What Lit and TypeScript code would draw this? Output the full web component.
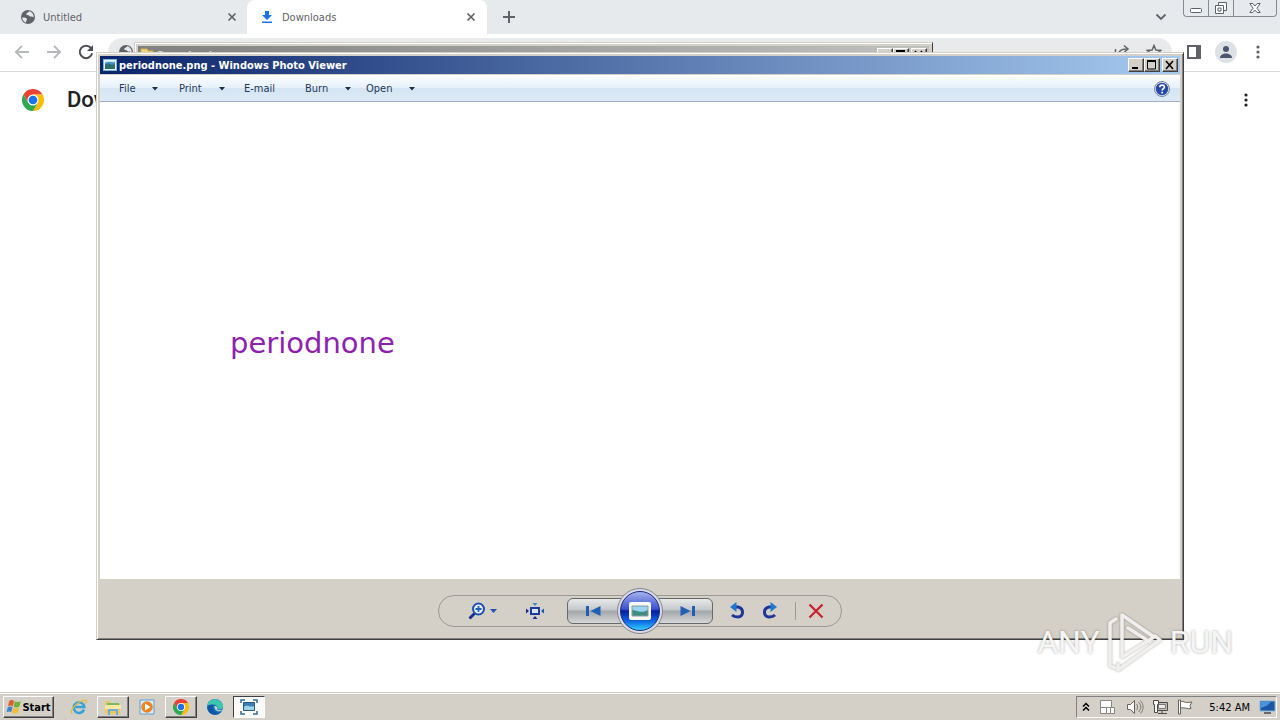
import { LitElement, html, svg, css } from "lit";
import { customElement } from "lit/decorators.js";

const globe = html`<svg width="16" height="16" viewBox="0 0 16 16" aria-hidden="true">
  <circle cx="8" cy="8" r="7" fill="#5f6368" />
  <path d="M2.200 8.600c2.300-.3 4.600.2 4.800 1.500.2 1.200-1.300 1.400-1 3.600C3.800 13 2.300 11 2.200 8.600zM9.200 2.300c-.5 1.500-3 1.300-3 2.700 0 1.300 2.300.8 3.200 2 .8 1.100 2.700.2 4.300 1.200.2-2.800-1.700-5.300-4.500-5.900z" fill="#e7eaed" />
</svg>`;

const closeX = html`<svg width="10" height="10" viewBox="0 0 10 10" aria-hidden="true">
  <path d="M1.500 1.500l7 7M8.500 1.500l-7 7" stroke="#5f6368" stroke-width="1.700" />
</svg>`;

const kebab = (color: string) => html`<svg width="16" height="16" viewBox="0 0 16 16" aria-hidden="true">
  <g fill="${color}"><circle cx="8" cy="3" r="1.600" /><circle cx="8" cy="8" r="1.600" /><circle cx="8" cy="13" r="1.600" /></g>
</svg>`;

const chromeLogo = (size: number) => html`<svg width="${size}" height="${size}" viewBox="0 0 48 48" aria-hidden="true">
  <path d="M24 12h20.800A24 24 0 0 0 3.200 12l10.400 18z" fill="#ea4335" />
  <path d="M34.400 30L24 48A24 24 0 0 0 44.800 12H24z" fill="#fbbc04" />
  <path d="M13.600 30L3.200 12A24 24 0 0 0 24 48l10.400-18z" fill="#2da94f" />
  <circle cx="24" cy="24" r="12" fill="#fff" /><circle cx="24" cy="24" r="9.500" fill="#1a73e8" />
</svg>`;

const photoGlyph = svg`
  <rect x="1.500" y="1.500" width="13" height="11" fill="#eaf6ff" stroke="#7fb4de" />
  <rect x="3" y="3" width="10" height="8" fill="#3f8fc9" />
  <path d="M3 7c3-3 6 1 10-1v5H3z" fill="#2c6f6c" /><path d="M3 5c3-2 6 0 10-1V3H3z" fill="#bfe4fa" />`;

const minGlyph = html`<svg width="12" height="10" viewBox="0 0 12 10" aria-hidden="true"><path d="M2 8h6" stroke="#000" stroke-width="2" /></svg>`;
const maxGlyph = html`<svg width="12" height="10" viewBox="0 0 12 10" aria-hidden="true"><path d="M1.500 1v8h8V1M1 1.500h9" fill="none" stroke="#000" /><path d="M1 1h9" stroke="#000" stroke-width="2" /></svg>`;
const xGlyph = html`<svg width="12" height="10" viewBox="0 0 12 10" aria-hidden="true"><path d="M2 1l7 8M9 1l-7 8" stroke="#000" stroke-width="1.600" /></svg>`;

const reset = css`
  *, *::before, *::after { box-sizing: border-box; }
  button, input { font: inherit; color: inherit; border: 0; padding: 0; margin: 0; background: none; }
  button { display: flex; align-items: center; justify-content: center; }
  svg { display: block; flex: none; }
`;

const caption = css`
  .captions { display: flex; gap: 2px; }
  .caption { width: 16px; height: 14px; background: #d4d0c8; border: 1px solid; border-color: #fff #404040 #404040 #fff; box-shadow: inset -1px -1px #808080; }
  .pair { display: flex; }
`;

@customElement("browser-window")
export class BrowserWindow extends LitElement {
  static styles = [reset, css`
    :host { display: flex; flex-direction: column; background: #fff; font-family: Roboto, sans-serif; color: #5f6368; }
    .strip { height: 34px; flex: none; background: #e7eaed; display: flex; align-items: center; }
    .tab { width: 240px; height: 34px; display: flex; align-items: center; gap: 7px; padding: 0 11px 0 12px; font: 11px "DejaVu Sans Condensed", "DejaVu Sans", sans-serif; }
    .tab.first { width: 247px; padding-left: 20px; padding-right: 10px; }
    .tab.active { background: #fff; border-radius: 8px 8px 0 0; }
    .tab button.name { flex: 1; justify-content: flex-start; }
    .plus { margin-left: 14px; width: 16px; height: 16px; }
    .spacer { flex: 1; }
    .more { margin-right: 16px; }
    .controls { align-self: flex-start; display: flex; margin-right: 3px; height: 17px; border: 1px solid #868b92; border-top: 0; border-radius: 0 0 4px 4px; }
    .controls button { width: 25px; border-right: 1px solid #868b92; }
    .controls button:last-child { width: 42px; border: 0; }
    .bar { height: 38px; flex: none; border-bottom: 1px solid #dadce0; display: flex; align-items: center; padding: 0 14px 2px; gap: 16px; }
    .address { flex: 1; height: 28px; border-radius: 14px; background: #e9eaec; display: flex; align-items: center; gap: 16px; padding: 0 10px; margin: 0 -2px; }
    .address input { flex: 1; min-width: 0; outline: 0; }
    .tools { display: flex; align-items: center; gap: 13px; }
    .avatar { width: 22px; height: 22px; border-radius: 50%; background: #dee1e6; }
    .header { display: flex; align-items: center; padding: 14px 26px 0 22px; gap: 23px; color: #202124; }
    h1 { margin: 0; font-size: 22px; font-weight: 500; line-height: 28px; }
  `];

  render() {
    return html`
      <div class="strip">
        <div class="tab first">${globe}<button class="name">Untitled</button><button aria-label="Close Untitled">${closeX}</button></div>
        <div class="tab active">
          <svg width="16" height="16" viewBox="0 0 16 16" aria-hidden="true"><path d="M6 2h4v4h3l-5 5-5-5h3zM3 12.500h10V14H3z" fill="#1a73e8" /></svg>
          <button class="name">Downloads</button><button aria-label="Close Downloads">${closeX}</button>
        </div>
        <button class="plus" aria-label="New tab"><svg width="14" height="14" viewBox="0 0 14 14"><path d="M7 1v12M1 7h12" stroke="#5f6368" stroke-width="2" /></svg></button>
        <span class="spacer"></span>
        <button class="more" aria-label="Search tabs"><svg width="12" height="8" viewBox="0 0 12 8"><path d="M1.500 1.500L6 6l4.500-4.500" fill="none" stroke="#5f6368" stroke-width="1.800" /></svg></button>
        <div class="controls">
          <button aria-label="Minimize"><svg width="12" height="16" viewBox="0 0 12 16"><rect x=".5" y="8.500" width="11" height="4" rx="1" fill="#fff" stroke="#5a626c" /></svg></button>
          <button aria-label="Restore"><svg width="14" height="16" viewBox="0 0 14 16"><g fill="#fff" stroke="#5a626c"><path d="M4.500 2.500h8v8h-8z" /><path d="M1.500 5.500h8v8h-8z" /><path d="M4 8h3v3H4z" /></g></svg></button>
          <button aria-label="Close"><svg width="12" height="16" viewBox="0 0 12 16"><path d="M.8 3.500h3L6 6l2.200-2.500h3L7.900 8.200l3.300 4.300h-3L6 10.200 3.800 12.500h-3l3.300-4.300z" fill="#fff" stroke="#5a626c" /></svg></button>
        </div>
      </div>
      <div class="bar">
        <button aria-label="Back"><svg width="16" height="16" viewBox="0 0 16 16"><path d="M15 8H2M8 1.800L1.800 8 8 14.200" fill="none" stroke="#b5b7ba" stroke-width="1.800" /></svg></button>
        <button aria-label="Forward"><svg width="16" height="16" viewBox="0 0 16 16"><path d="M1 8h13M8 1.800L14.200 8 8 14.200" fill="none" stroke="#b5b7ba" stroke-width="1.800" /></svg></button>
        <button aria-label="Reload"><svg width="16" height="16" viewBox="0 0 16 16"><path d="M13 4.200A6.200 6.200 0 1 0 14.100 9.200" fill="none" stroke="#4c5055" stroke-width="2" /><path d="M15 1v6H9z" fill="#4c5055" /></svg></button>
        <div class="address">
          ${globe}<input aria-label="Address" />
          <svg width="16" height="16" viewBox="0 0 16 16" aria-hidden="true"><path d="M1.500 5v9.500h11V11M4.500 11c0-4 3-6 8-6M10 1.500L14 5l-4 3.500" fill="none" stroke="#5f6368" stroke-width="1.500" /></svg>
          <svg width="16" height="16" viewBox="0 0 16 16" aria-hidden="true"><path d="M8 1.500l1.900 4.500 4.900.4-3.700 3.200 1.100 4.800L8 11.900l-4.200 2.500 1.100-4.800L1.200 6.400 6.100 6z" fill="none" stroke="#5f6368" stroke-width="1.500" /></svg>
        </div>
        <div class="tools">
          <button aria-label="Side panel"><svg width="16" height="16" viewBox="0 0 16 16"><path d="M1 1h14v14H1z" fill="#5f6368" /><path d="M3 3h7v10H3z" fill="#fff" /></svg></button>
          <button class="avatar" aria-label="Profile"><svg width="14" height="14" viewBox="0 0 14 14"><circle cx="7" cy="4" r="3" fill="#4a5670" /><path d="M1 13c0-6 12-6 12 0z" fill="#4a5670" /></svg></button>
          <button aria-label="Menu">${kebab("#5f6368")}</button>
        </div>
      </div>
      <div class="header">${chromeLogo(22)}<h1>Downloads</h1><span class="spacer"></span><button aria-label="More actions">${kebab("#202124")}</button></div>
    `;
  }
}

@customElement("folder-window")
export class FolderWindow extends LitElement {
  static styles = [reset, caption, css`
    :host { display: block; background: #d4d0c8; border: 1px solid; border-color: #d4d0c8 #404040 #404040 #d4d0c8; box-shadow: inset 1px 1px #fff; padding: 3px; }
    .title { height: 18px; display: flex; align-items: center; gap: 3px; padding: 0 2px; color: #d4d0c8; background: linear-gradient(90deg, #808080, #c0c0c0); font: bold 11px "DejaVu Sans Condensed", "DejaVu Sans", sans-serif; }
    .name { flex: 1; }
  `];

  render() {
    return html`<div class="title">
      <svg width="14" height="14" viewBox="0 0 14 14" aria-hidden="true"><path d="M1 1h6l1 2h5v10H1z" fill="#f3d774" stroke="#d8b14a" /></svg>
      <span class="name">Downloads</span>
      <div class="captions"><div class="pair"><button class="caption" aria-label="Minimize">${minGlyph}</button><button class="caption" aria-label="Maximize">${maxGlyph}</button></div><button class="caption" aria-label="Close">${xGlyph}</button></div>
    </div>`;
  }
}

@customElement("photo-viewer")
export class PhotoViewer extends LitElement {
  static styles = [reset, caption, css`
    :host { display: flex; flex-direction: column; background: #d4d0c8; border: 1px solid; border-color: #d4d0c8 #404040 #404040 #d4d0c8; box-shadow: inset 1px 1px #fff, inset -1px -1px #808080; padding: 3px; font: 11px "DejaVu Sans Condensed", "DejaVu Sans", sans-serif; }
    .title { height: 18px; flex: none; display: flex; align-items: center; gap: 1px; padding: 0 2px; color: #fff; font-weight: bold; background: linear-gradient(90deg, #0a246a, #a6caf0); }
    .name { flex: 1; white-space: nowrap; }
    .menu { height: 27px; flex: none; margin-top: 1px; display: grid; grid-template-columns: 60px 65px 61px 61px 1fr 16px; align-items: center; padding: 0 10px 0 19px; color: #1e395b; background: linear-gradient(#fbfdff, #e6f0fa 46%, #d6e5f3 50%, #dceaf5); border-top: 1px solid #fff; border-bottom: 1px solid #a0afc3; }
    .menu button { justify-content: flex-start; gap: 17px; }
    .photo { flex: 1; background: #fff; display: flex; align-items: center; padding: 4px 0 0 130px; font: 29px "DejaVu Sans", sans-serif; color: #8f1fae; }
    .footer { height: 57px; flex: none; display: flex; align-items: center; justify-content: center; padding-top: 6px; }
    .pill { width: 404px; height: 32px; border: 1px solid #9c9a96; border-radius: 16px; display: grid; grid-template: 30px / 64px 64px 146px 48px 18px 1fr; align-items: center; }
    .zoom { justify-self: end; gap: 4px; margin-right: 6px; }
    .nav { display: flex; align-items: center; }
    .step { flex: 1; height: 26px; border: 1px solid #66686c; background: linear-gradient(#e8e9e9, #c4c6c8 46%, #a3a6aa 50%, #d5d6d7); }
    .step.prev { border-radius: 6px 0 0 6px; margin-right: -6px; padding-right: 4px; }
    .step.next { border-radius: 0 6px 6px 0; margin-left: -6px; padding-left: 4px; }
    .show { width: 46px; height: 46px; z-index: 1; }
    .delete { border-left: 1px solid #9c9a96; height: 18px; padding-left: 12px; justify-self: start; margin-left: 16px; }
  `];

  render() {
    const arrow = html`<svg width="6" height="4" viewBox="0 0 6 4" aria-hidden="true"><path d="M0 0h6L3 3.500z" fill="#1e2f4d" /></svg>`;
    const item = (name: string, drop = true) => html`<button>${name}${drop ? arrow : ""}</button>`;
    return html`
      <div class="title">
        <svg width="16" height="14" viewBox="0 0 16 14" aria-hidden="true">${photoGlyph}</svg>
        <span class="name">periodnone.png - Windows Photo Viewer</span>
        <div class="captions"><div class="pair"><button class="caption" aria-label="Minimize">${minGlyph}</button><button class="caption" aria-label="Maximize">${maxGlyph}</button></div><button class="caption" aria-label="Close">${xGlyph}</button></div>
      </div>
      <div class="menu">
        ${item("File")}${item("Print")}${item("E-mail", false)}${item("Burn")}${item("Open")}
        <button aria-label="Help"><svg width="16" height="16" viewBox="0 0 16 16"><circle cx="8" cy="8" r="7.500" fill="#e4e9f2" stroke="#7b8499" /><circle cx="8" cy="8" r="6.200" fill="#2549a8" /><path d="M5.800 6.300c0-3 4.600-2.900 4.600-.3 0 1.700-2.200 1.700-2.200 3.400M8.200 10.800v1.600" fill="none" stroke="#fff" stroke-width="1.700" /></svg></button>
      </div>
      <div class="photo">periodnone</div>
      <div class="footer">
        <div class="pill">
          <button class="zoom" aria-label="Zoom">
            <svg width="18" height="18" viewBox="0 0 18 18"><circle cx="10.500" cy="7" r="5.500" fill="#eaf4ff" stroke="#1d4fb4" stroke-width="2" /><path d="M10.500 4v6M7.500 7h6" stroke="#1d5fc4" stroke-width="1.800" /><path d="M6.500 11.500L1.500 16.500" stroke="#15308c" stroke-width="2.800" /></svg>
            <svg width="7" height="4" viewBox="0 0 7 4"><path d="M0 0h7L3.500 4z" fill="#1d56b0" /></svg>
          </button>
          <button aria-label="Actual size"><svg width="18" height="16" viewBox="0 0 18 16"><rect x="5" y="5" width="8" height="6" fill="#d5e6f7" stroke="#1b3c9e" stroke-width="2" /><path d="M6.500 0h5L9 3z" fill="#3a87cf" /><path d="M6.500 16h5L9 13zM0 5.500v5L3 8z" fill="#16288a" /><path d="M18 5.500v5L15 8z" fill="#1d56b0" /></svg></button>
          <div class="nav">
            <button class="step prev" aria-label="Previous"><svg width="15" height="12" viewBox="0 0 15 12"><path d="M0 1h3v10H0zM14.500 1v10L4.500 6z" fill="#1f5fb5" /></svg></button>
            <button class="show" aria-label="Play slide show"><svg width="46" height="46" viewBox="0 0 46 46">
              <defs><linearGradient id="orb" x2="0" y2="1"><stop offset="0" stop-color="#a9b6ee" /><stop offset=".45" stop-color="#3a50cf" /><stop offset=".5" stop-color="#0a1ba0" /><stop offset=".75" stop-color="#0b62e0" /><stop offset="1" stop-color="#35d4ff" /></linearGradient></defs>
              <circle cx="23" cy="23" r="22.500" fill="#d9dbe2" stroke="#85878f" /><circle cx="23" cy="23" r="19.500" fill="url(#orb)" stroke="#1c2c86" />
              <rect x="12" y="14" width="22" height="18" rx="2" fill="#f6f8fa" /><rect x="15" y="18" width="16" height="10" fill="#9bd3ef" /><path d="M15 22c5 0 8 4 16 0v6H15z" fill="#3e8e7f" /><path d="M15 18h16v10H15z" fill="none" stroke="#8a98a8" />
            </svg></button>
            <button class="step next" aria-label="Next"><svg width="15" height="12" viewBox="0 0 15 12"><path d="M12 1h3v10h-3zM.5 1v10l10-5z" fill="#1f5fb5" /></svg></button>
          </div>
          <button aria-label="Rotate counterclockwise"><svg width="16" height="18" viewBox="0 0 16 18"><path d="M6 5h3c6.500 1.500 5.500 10 0 10-3 0-4.500-.5-6-2" fill="none" stroke="#1c3596" stroke-width="3" /><path d="M1 5L7.500 0v10z" fill="#1f78cf" /></svg></button>
          <button aria-label="Rotate clockwise"><svg width="16" height="18" viewBox="0 0 16 18"><path d="M10 5H7c-6.500 1.500-5.500 10 0 10 3 0 4.500-.5 6-2" fill="none" stroke="#1c3596" stroke-width="3" /><path d="M15 5L8.500 0v10z" fill="#1f78cf" /></svg></button>
          <button class="delete" aria-label="Delete"><svg width="16" height="16" viewBox="0 0 16 16"><path d="M1.500 1.500l13 13M14.500 1.500l-13 13" stroke="#c9202c" stroke-width="2.200" /></svg></button>
        </div>
      </div>
    `;
  }
}

@customElement("task-bar")
export class TaskBar extends LitElement {
  static styles = [reset, css`
    :host { display: flex; align-items: center; height: 28px; padding: 3px 3px 2px; background: #d4d0c8; border-top: 1px solid #d4d0c8; box-shadow: inset 0 1px #fff; font: 11px "DejaVu Sans Condensed", "DejaVu Sans", sans-serif; color: #000; }
    .start { height: 22px; width: 51px; font-weight: bold; }
    .start, .open { background: #d4d0c8; border: 1px solid; border-color: #fff #404040 #404040 #fff; box-shadow: inset -1px -1px #808080; }
    .apps { display: flex; gap: 2px; margin-left: 9px; flex: 1; }
    .app { width: 32px; height: 22px; }
    .current { background: #fbfaf9; border: 1px solid; border-color: #404040 #fff #fff #404040; }
    .tray { height: 22px; display: flex; align-items: center; border: 1px solid; border-color: #808080 #fff #fff #808080; padding: 0 0 0 5px; gap: 8px; }
    .time { margin: 0 1px 0 7px; }
  `];

  render() {
    return html`
      <button class="start">
        <svg width="16" height="16" viewBox="0 0 17 16" aria-hidden="true"><path d="M3.500 1.500c2-1.200 3.500-1 5 0L7.200 7.200c-1.600-1-3.200-1-5 0z" fill="#e2592c" /><path d="M9.300 2c2 1 4 1 6.500 0l-1.600 5.700c-2 1-4 1-6.100 0z" fill="#6fb33b" /><path d="M2 8.200c1.800-1 3.300-1 5 0l-1.400 5.200c-1.500-1-3-1-5 0z" fill="#3b82cf" /><path d="M7.800 8.700c2 1 4 1 6.100 0l-1.500 5.400c-2 1-4 1-6 0z" fill="#f5bd2c" /></svg>
        Start
      </button>
      <div class="apps">
        <button class="app" aria-label="Internet Explorer"><svg width="18" height="18" viewBox="0 0 18 18"><path d="M14 11.500A5.300 5.300 0 1 1 14.300 9H5" fill="none" stroke="#37a3dc" stroke-width="2.600" /><path d="M2 15.500C-1 12 10 1.500 15.500 2.200c1.500.3 1 2.500 0 3.500" fill="none" stroke="#e9b93c" stroke-width="1.300" /></svg></button>
        <button class="app open" aria-label="Windows Explorer"><svg width="18" height="18" viewBox="0 0 18 18"><path d="M1 3h5l1 2h9v11H1z" fill="#ecc95b" /><path d="M3 5h12v5H3z" fill="#75bb6c" /><path d="M1 7h16v4H1z" fill="#fbe9a0" /><path d="M4 17v-5q0-1 1-1h8q1 0 1 1v5h-2v-4H6v4z" fill="#69aede" /></svg></button>
        <button class="app" aria-label="Windows Media Player"><svg width="16" height="16" viewBox="0 0 16 16"><path d="M1 1h14v14H1z" fill="#d8ecfb" stroke="#5d9fd3" /><circle cx="8" cy="8" r="5.800" fill="#f0831e" /><path d="M6 4.500v7L11.500 8z" fill="#fff" /></svg></button>
        <button class="app open" aria-label="Google Chrome">${chromeLogo(16)}</button>
        <button class="app" aria-label="Microsoft Edge"><svg width="18" height="18" viewBox="0 0 18 18"><circle cx="9" cy="9" r="8" fill="#1673c4" /><path d="M1.200 8C2-1 15.500-.8 17 7.500c.3 3.500-3 4.700-6 3.500 1.500-2-.5-4.800-3.800-4.500C4 6.500 2 7 1.200 8z" fill="#3cc6ae" /><path d="M7.500 7c-2 5 2 9 7.500 7.300C8 19.500 1 15 1.500 9c1.300-2 4-2.500 6-2z" fill="#0f57a5" /><path d="M8.500 8c2-.5 3.500 1.500 2.300 3.200 1.500 1.300 3.700 1.300 5.500.4-1.300 3-8.300 2-7.800-3.600z" fill="#d4d0c8" /></svg></button>
        <button class="app current" aria-label="Windows Photo Viewer"><svg width="18" height="16" viewBox="0 0 18 16"><path d="M3.500 3.500h11v8h-11z" fill="#3a7fb5" stroke="#28587e" /><path d="M4 8c3-3 6 1 10-1v4H4z" fill="#9fd4e9" /><path d="M1 4V1h4M13 1h4v3M17 12v3h-4M5 15H1v-3" fill="none" stroke="#326b96" stroke-width="1.500" /></svg></button>
      </div>
      <div class="tray">
        <svg width="8" height="10" viewBox="0 0 8 10" aria-hidden="true"><path d="M1 4.500L4 1.500l3 3M1 8.500l3-3 3 3" fill="none" stroke="#000" stroke-width="1.500" /></svg>
        <svg width="20" height="18" viewBox="0 0 20 18" aria-hidden="true"><g fill="#fff" stroke="#8a8782"><path d="M2.500 2.500h11v7h-11zM2.500 9.500h6v6h-6zM8.500 9.500h4v6h-4zM12.500 9.500h4v6h-4z" /></g></svg>
        <svg width="18" height="16" viewBox="0 0 18 16" aria-hidden="true"><path d="M1.500 5.500h3l4-4v13l-4-4h-3z" fill="#fff" stroke="#66645f" /><path d="M10.500 5c1.500 2 1.500 4 0 6M12.500 3c3 3 3 7 0 10M14.500 1.500c3.500 4 3.500 9 0 13" fill="none" stroke="#7b7873" /></svg>
        <svg width="17" height="16" viewBox="0 0 17 16" aria-hidden="true"><path d="M4.500 3.500h11v8h-11z" fill="#c3c1bd" stroke="#4c4a47" /><path d="M6.500 5.500h7v4h-7z" fill="#eeece8" stroke="#777" /><path d="M10 12v2M6 14.500h9" stroke="#4c4a47" /><path d="M1.500 1.500h5v4h-1v8h-3v-8h-1z" fill="#fff" stroke="#4c4a47" /></svg>
        <svg width="17" height="16" viewBox="0 0 17 16" aria-hidden="true"><path d="M3.500 2.500c3-1 4 1.500 7 1l4.500-.5-2 3.500 1 3c-3 1-6-1.500-10.500-.5z" fill="#fff" stroke="#66645f" /><path d="M1.500 1h2v14h-2z" fill="#fff" stroke="#66645f" /></svg>
        <time class="time">5:42 AM</time>
        <svg width="17" height="14" viewBox="0 0 17 14" aria-hidden="true"><path d="M1 1h15v10H1z" fill="#1b55a8" stroke="#8bb5dd" /><path d="M1.500 8C6 7 10 5 12 1.500H1.500z" fill="#4d93d8" /><path d="M5 13h7" stroke="#445" stroke-width="1.500" /></svg>
      </div>
    `;
  }
}

@customElement("app-root")
export class AppRoot extends LitElement {
  static styles = [reset, css`
    :host { display: flex; flex-direction: column; height: 100vh; position: relative; overflow: hidden; background: #fff; }
    browser-window { flex: 1; min-height: 0; }
    task-bar { flex: none; }
    folder-window { position: absolute; left: 134px; right: 347px; top: 42px; height: 400px; }
    photo-viewer { position: absolute; inset: 52px 96px 80px; }
    .mark { position: absolute; right: 47px; bottom: 46px; display: flex; align-items: center; gap: 6px; color: #f6f5f4; font: 32px/60px Roboto, sans-serif; text-shadow: 0 0 3px #00000055; }
    .mark svg { filter: drop-shadow(0 0 1px #00000055); }
  `];

  render() {
    return html`
      <browser-window></browser-window>
      <folder-window></folder-window>
      <photo-viewer></photo-viewer>
      <div class="mark"><span>ANY</span>
        <svg width="58" height="64" viewBox="0 0 58 64" aria-hidden="true"><g fill="none" stroke="#f0efed" stroke-width="3.500" stroke-linejoin="round" stroke-linecap="round"><path d="M16 17v30L48 27 16 5v12" /><path d="M22 18l22 14M10 9L4 13v43l5 2M12 54v6l42-30-5-4" /></g></svg>
        <span>RUN</span>
      </div>
      <task-bar></task-bar>
    `;
  }
}
